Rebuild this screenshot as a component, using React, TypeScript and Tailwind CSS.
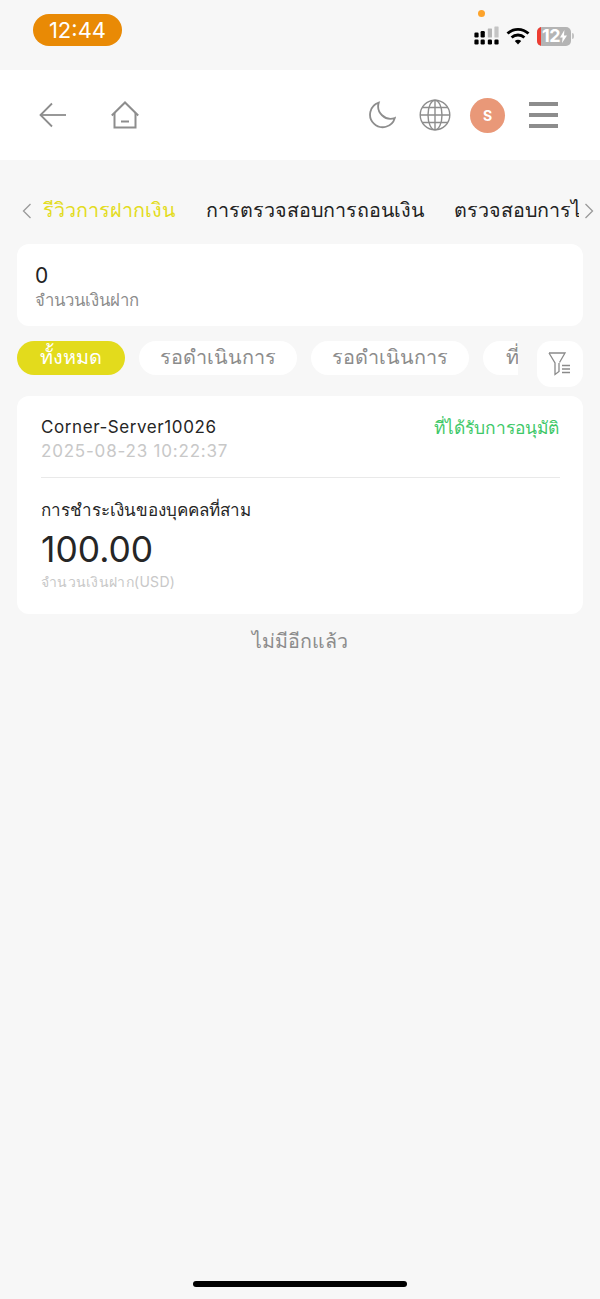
import React from 'react'

const font = "font-['Inter','Noto_Sans','Liberation_Sans',sans-serif]"

function SignalIcon() {
  // dotted cellular bars, the two right columns are only half lit
  return (
    <svg width="25" height="20" viewBox="0 0 25 20">
      <rect x="0.4" y="6.5" width="4.2" height="5" rx="1.2" fill="#000" />
      <rect x="0.4" y="13.5" width="4.2" height="5" rx="1.2" fill="#000" />
      <rect x="6.6" y="5" width="4.2" height="6.5" rx="1.2" fill="#000" />
      <rect x="6.6" y="13.5" width="4.2" height="5" rx="1.2" fill="#000" />
      <rect x="13.8" y="2.5" width="4.2" height="9" rx="0.6" fill="#b5b5b5" />
      <rect x="13.8" y="13.5" width="4.2" height="5" rx="1.2" fill="#000" />
      <rect x="20.4" y="0.5" width="4.2" height="11" rx="0.6" fill="#c4c4c4" />
      <rect x="20.4" y="13.5" width="4.2" height="5" rx="1.2" fill="#000" />
    </svg>
  )
}

function WifiIcon() {
  return (
    <svg width="24" height="18" viewBox="0 0 24 18" fill="none" stroke="#000" strokeWidth="2.8">
      <path d="M1.5 6.6a15 15 0 0 1 21 0" />
      <path d="M5.6 10.6a9.2 9.2 0 0 1 12.8 0" />
      <path d="M12 17.4l-3.2-3.4a4.5 4.5 0 0 1 6.4 0z" fill="#000" stroke="none" />
    </svg>
  )
}

function BatteryIcon() {
  return (
    <div className="flex items-center">
      <div className="relative flex h-[19px] w-[34px] items-center justify-center overflow-hidden rounded-[5px] bg-[#b4b4b4] text-[18px] font-bold leading-none text-white">
        <span className="absolute inset-y-0 left-0 w-[4px] bg-[#ee3d32]" />
        <span className="relative ml-[1px] tracking-[-0.5px]">12</span>
        <svg width="7" height="13" viewBox="0 0 7 13" className="relative">
          <path d="M4.4 0L0 7.4h2.6L2 13l5-7.6H4z" fill="#fff" />
        </svg>
      </div>
      <div className="ml-[1px] h-[6px] w-[2px] rounded-r-full bg-[#c4c4c4]" />
    </div>
  )
}

function BackIcon() {
  return (
    <svg width="28" height="26" viewBox="0 0 28 26" fill="none" stroke="#8d8d8d" strokeWidth="1.8">
      <path d="M13 1.5L1.5 13L13 24.5" />
      <path d="M1.5 13H27" />
    </svg>
  )
}

function HomeIcon() {
  return (
    <svg width="28" height="28" viewBox="0 0 28 28" fill="none" stroke="#8d8d8d" strokeWidth="2">
      <path d="M0.8 14.5L14 1.5L27.2 14.5" />
      <path d="M3.5 12V26.5H24.5V12" />
      <path d="M10 20.5H18" />
    </svg>
  )
}

function MoonIcon() {
  return (
    <svg width="28" height="28" viewBox="0 0 28 28" fill="none" stroke="#8d8d8d" strokeWidth="1.8">
      <path d="M10.8 1.6A12.6 12.6 0 1 0 26.8 17A12.4 12.4 0 0 1 10.8 1.6Z" />
    </svg>
  )
}

function GlobeIcon() {
  return (
    <svg width="32" height="32" viewBox="0 0 32 32" fill="none" stroke="#8d8d8d" strokeWidth="1.4">
      <circle cx="16" cy="16" r="14.8" />
      <ellipse cx="16" cy="16" rx="7" ry="14.8" />
      <path d="M16 1.2V30.8M1.2 16H30.8M3.4 8.5H28.6M3.4 23.5H28.6" />
    </svg>
  )
}

function FilterIcon() {
  return (
    <svg width="24" height="24" viewBox="0 0 24 24" fill="none" stroke="#8a8a8a" strokeWidth="1.3">
      <path d="M1 1H17L11.5 10.5" />
      <path d="M1 1L7 11V22.5L11 19.5V11" />
      <path d="M14 13.5H22M14 17H22M14 20.5H22" />
    </svg>
  )
}

function Chevron({ right }: { right?: boolean }) {
  return (
    <svg width="10" height="16" viewBox="0 0 10 16" fill="none" stroke="#9a9a9a" strokeWidth="1.3">
      <path d={right ? 'M1.5 1L8.5 8L1.5 15' : 'M8.5 1L1.5 8L8.5 15'} />
    </svg>
  )
}

const tabs = ['รีวิวการฝากเงิน', 'การตรวจสอบการถอนเงิน', 'ตรวจสอบการไหลของเงิน']
const chips = [
  { label: 'ทั้งหมด', width: 'w-[108px]' },
  { label: 'รอดำเนินการ', width: 'w-[158px]' },
  { label: 'รอดำเนินการ', width: 'w-[158px]' },
  { label: 'ที่ได้รับการอนุมัติ', width: 'w-[191px]' },
]

export default function App() {
  return (
    <div className={`${font} flex h-[1299px] w-[600px] flex-col overflow-hidden bg-[#f7f7f7]`}>
      {/* status bar */}
      <div className="relative flex h-[70px] shrink-0 items-start justify-between">
        <div className="ml-[33px] mt-[14px] flex h-[32px] w-[89px] items-center justify-center rounded-full bg-[#e98a05] text-[22px] text-white">
          12:44
        </div>
        <span className="absolute left-[478px] top-[10px] h-[7px] w-[7px] rounded-full bg-[#fda32b]" />
        <div className="mr-[26px] mt-[26px] flex items-center gap-[7px]">
          <SignalIcon />
          <WifiIcon />
          <BatteryIcon />
        </div>
      </div>

      {/* top nav */}
      <header className="flex h-[90px] shrink-0 items-center justify-between bg-white pl-[39px] pr-[42px]">
        <div className="flex items-center gap-[44px]">
          <BackIcon />
          <HomeIcon />
        </div>
        <div className="flex items-center">
          <MoonIcon />
          <div className="ml-[23px]"><GlobeIcon /></div>
          <div className="ml-[19px] flex h-[35px] w-[35px] items-center justify-center rounded-full bg-[#e99878] text-[14px] font-bold text-white">
            S
          </div>
          <div className="ml-[24px] flex h-[26px] w-[29px] flex-col justify-between">
            <span className="h-[4px] bg-[#8d8d8d]" />
            <span className="h-[4px] bg-[#8d8d8d]" />
            <span className="h-[4px] bg-[#8d8d8d]" />
          </div>
        </div>
      </header>

      {/* tab strip */}
      <div className="mt-[34px] flex h-[34px] items-center pl-[22px] pr-[6px]">
        <Chevron />
        <div className="ml-[11px] flex min-w-0 flex-1 gap-[30.5px] overflow-hidden whitespace-nowrap text-[19.7px] font-medium text-[#222]">
          {tabs.map((t, i) => (
            <span key={t} className={i === 0 ? 'text-[#e3dc21]' : ''}>{t}</span>
          ))}
        </div>
        <div className="ml-[5px]"><Chevron right /></div>
      </div>

      {/* deposit total */}
      <div className="mx-[17px] mt-[16px] h-[82px] rounded-[12px] bg-white pl-[18px] pt-[19px]">
        <div className="text-[21px] leading-[26px] text-[#222]">0</div>
        <div className="text-[16.7px] leading-[22px] text-[#8c8c8c]">จำนวนเงินฝาก</div>
      </div>

      {/* status filter chips */}
      <div className="relative mx-[17px] mt-[15px] h-[46px]">
        <div className="flex w-[501px] gap-[14px] overflow-hidden whitespace-nowrap">
          {chips.map((c, i) => (
            <span
              key={i}
              className={`flex h-[34px] shrink-0 items-center justify-center rounded-full text-[19.85px] ${c.width} ${
                i === 0 ? 'bg-[#e3db1c] font-medium text-white' : 'bg-white text-[#8c8c8c]'
              }`}
            >
              {c.label}
            </span>
          ))}
        </div>
        <button className="absolute right-0 top-0 flex h-[46px] w-[46px] items-center justify-center rounded-[14px] bg-white">
          <FilterIcon />
        </button>
      </div>

      {/* deposit record */}
      <div className="mx-[17px] mt-[9px] h-[218px] rounded-[12px] bg-white pl-[24px] pr-[23px] pt-[20px]">
        <div className="flex items-start justify-between border-b border-[#e9e9e9] pb-[14px]">
          <div>
            <div className="text-[17px] leading-[23px] tracking-[0.58px] text-[#262626]">Corner-Server10026</div>
            <div className="text-[17px] leading-[24px] tracking-[0.8px] text-[#c8c8c8]">2025-08-23 10:22:37</div>
          </div>
          <div className="pr-[1px] text-[17.45px] leading-[23px] text-[#3ec868]">ที่ได้รับการอนุมัติ</div>
        </div>
        <div className="mt-[21px] text-[17px] leading-[23px] text-[#262626]">การชำระเงินของบุคคลที่สาม</div>
        <div className="mt-[6px] text-[35.4px] font-normal leading-[44px] text-[#262626]">100.00</div>
        <div className="text-[14px] leading-[20px] tracking-[0.3px] text-[#c8c8c8]">จำนวนเงินฝาก(USD)</div>
      </div>

      <div className="mt-[13px] text-center text-[19.6px] leading-[28px] text-[#8c8c8c]">ไม่มีอีกแล้ว</div>

      {/* home indicator */}
      <div className="mt-auto mb-[12px] flex justify-center">
        <span className="h-[6px] w-[214px] rounded-full bg-black" />
      </div>
    </div>
  )
}
